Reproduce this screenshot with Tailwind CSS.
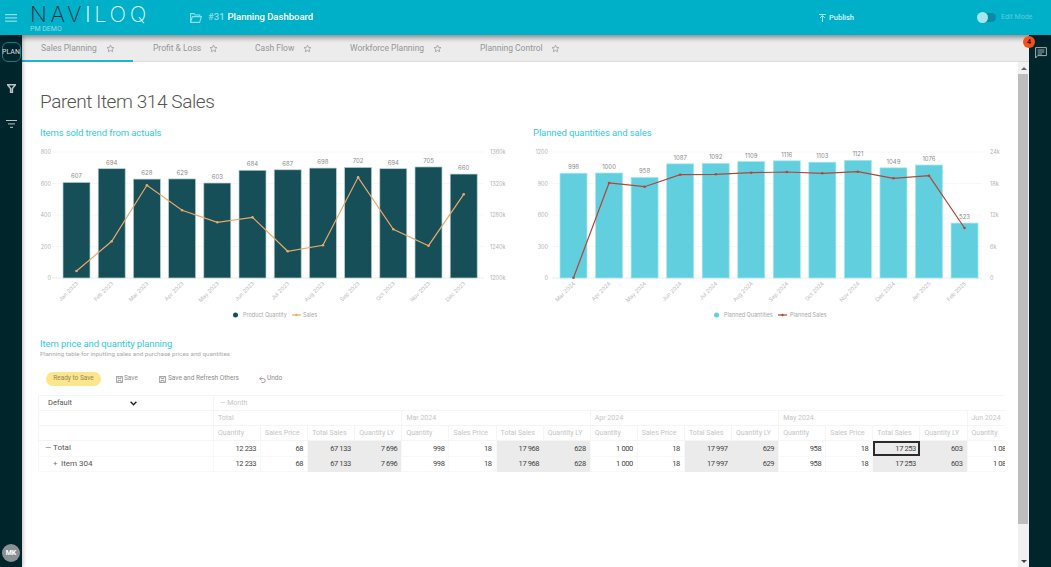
<!DOCTYPE html>
<html lang="en">
<head>
    <meta charset="UTF-8">
    <meta name="viewport" content="width=device-width, initial-scale=1.0">
    <title>Naviloq | Planning Dashboard</title>
    <script src="https://cdn.jsdelivr.net/npm/@tailwindcss/browser@4"></script>
</head>
<body class="h-[567px] w-[1051px] overflow-hidden flex flex-col bg-white font-['Roboto',sans-serif]">
    <!-- Header -->
    <header class="relative z-20 h-[35px] shrink-0 flex items-center bg-[#00b0c9] shadow-[0_2px_5px_rgba(0,0,0,0.35)]">
        <svg class="ml-[5px] w-[12px] h-[8px] text-[#8fdde8]" viewBox="0 0 12 8" fill="currentColor">
            <rect width="12" height="1.2" /><rect y="3.3" width="12" height="1.2" /><rect y="6.6" width="12" height="1.2" />
        </svg>
        <div class="ml-[13px] w-[130px] h-[35px] relative">
            <div class="absolute left-0 top-[1px] text-[22px] leading-[26px] font-['Inter'] font-[200] tracking-[3.6px] whitespace-nowrap text-[#d9f6fa]"><span class="text-[#06323c]">NAV</span><span class="text-white">I</span>LOQ</div>
            <div class="absolute left-0 top-[25px] text-[7px] leading-[9px] text-[#8fdde8]">PM DEMO</div>
        </div>
        <div class="ml-[30px] w-[629px] flex items-center">
            <svg class="w-[12px] h-[10px] text-[#8fdde8]" viewBox="0 0 12 10" fill="none" stroke="currentColor" stroke-width="1.1">
                <path d="M.6 9.4V.6h3.6l1 1.4h4.6v1.6M.6 9.4h9l1.8-5.8H2.4L.6 9.4Z" />
            </svg>
            <span class="ml-[6px] text-[9.5px] font-medium text-[#8fdde8]">#31</span>
            <span class="ml-[3px] text-[9.5px] font-medium text-white">Planning Dashboard</span>
        </div>
        <div class="w-[158px] flex items-center">
            <svg class="w-[7px] h-[8px] text-[#b5ecf3]" viewBox="0 0 7 8" fill="none" stroke="currentColor" stroke-width="0.9">
                <path d="M0 .5h7M1 4l2.5-2.5L6 4M3.5 2v6" />
            </svg>
            <span class="ml-[3px] text-[7.5px] font-medium text-[#d9f6fa]">Publish</span>
        </div>
        <div class="relative w-[19px] h-[9px] rounded-full bg-[#0a8aa6]">
            <div class="absolute left-0 top-[-1px] w-[11px] h-[11px] rounded-full bg-[#a6e6ee]"></div>
        </div>
        <span class="ml-[5px] text-[7px] text-[#5cccdc]">Edit Mode</span>
    </header>

    <div class="flex-1 flex min-h-0">
        <!-- Left rail -->
        <aside class="relative z-10 w-[22px] shrink-0 flex flex-col items-center bg-[#00252b] shadow-[1px_0_4px_rgba(0,0,0,0.25)]">
            <div class="mt-[7px] w-[19px] h-[20px] flex items-center justify-center rounded-[6px] border border-[#0e7f8e] text-[7px] text-[#d5e2e4]">PLAN</div>
            <svg class="mt-[22px] w-[9px] h-[9px] text-[#b9c6c8]" viewBox="0 0 9 9" fill="none" stroke="currentColor" stroke-width="1.5">
                <path d="M.6.8h7.8L5.4 4.6v3.8h-1.8V4.6L.6.8Z" />
            </svg>
            <svg class="mt-[27px] w-[11px] h-[8px] text-[#b9c6c8]" viewBox="0 0 11 8" fill="currentColor">
                <rect width="11" height="1" /><rect x="2" y="3.4" width="7" height="1" /><rect x="4" y="6.8" width="3" height="1" />
            </svg>
            <div class="mt-auto mb-[5px] w-[18px] h-[18px] rounded-full bg-[#8a9193] flex items-center justify-center text-[7px] font-bold text-white">MK</div>
        </aside>

        <!-- Centre -->
        <div class="flex-1 min-w-0 flex flex-col">
            <!-- Tabs -->
            <nav class="h-[27px] shrink-0 flex bg-gradient-to-b from-[#cfcfcf] via-[#ececec] via-30% to-[#ececec] border-b border-[#dcdcdc] text-[8.5px] text-[#969696]">
                <div class="w-[111px] pl-[19px] pt-[1px] flex items-center gap-[9px] border-b-2 border-[#1cb6cc] h-[27px]">Sales Planning <svg class="w-[9px] h-[9px]" viewBox="0 0 24 24" fill="none" stroke="currentColor" stroke-width="2"><path d="m12 3 2.8 5.9 6.4.8-4.7 4.4 1.2 6.4-5.7-3.1-5.7 3.1 1.2-6.4-4.7-4.4 6.4-.8L12 3Z" /></svg></div>
                <div class="w-[102px] pl-[20px] pt-[1px] flex items-center gap-[8px]">Profit &amp; Loss <svg class="w-[9px] h-[9px]" viewBox="0 0 24 24" fill="none" stroke="currentColor" stroke-width="2"><path d="m12 3 2.8 5.9 6.4.8-4.7 4.4 1.2 6.4-5.7-3.1-5.7 3.1 1.2-6.4-4.7-4.4 6.4-.8L12 3Z" /></svg></div>
                <div class="w-[95px] pl-[20px] pt-[1px] flex items-center gap-[9px]">Cash Flow <svg class="w-[9px] h-[9px]" viewBox="0 0 24 24" fill="none" stroke="currentColor" stroke-width="2"><path d="m12 3 2.8 5.9 6.4.8-4.7 4.4 1.2 6.4-5.7-3.1-5.7 3.1 1.2-6.4-4.7-4.4 6.4-.8L12 3Z" /></svg></div>
                <div class="w-[130px] pl-[20px] pt-[1px] flex items-center gap-[9px]">Workforce Planning <svg class="w-[9px] h-[9px]" viewBox="0 0 24 24" fill="none" stroke="currentColor" stroke-width="2"><path d="m12 3 2.8 5.9 6.4.8-4.7 4.4 1.2 6.4-5.7-3.1-5.7 3.1 1.2-6.4-4.7-4.4 6.4-.8L12 3Z" /></svg></div>
                <div class="pl-[20px] pt-[1px] flex items-center gap-[8px]">Planning Control <svg class="w-[9px] h-[9px]" viewBox="0 0 24 24" fill="none" stroke="currentColor" stroke-width="2"><path d="m12 3 2.8 5.9 6.4.8-4.7 4.4 1.2 6.4-5.7-3.1-5.7 3.1 1.2-6.4-4.7-4.4 6.4-.8L12 3Z" /></svg></div>
            </nav>

            <div class="flex-1 min-h-0 flex">
                <!-- Main -->
                <main class="flex-1 min-w-0 overflow-hidden pl-[18px] pt-[26px]">
                    <h1 class="h-[28px] text-[19px] leading-[28px] font-light tracking-[-0.4px] text-[#555]">Parent Item 314 Sales</h1>

                    <div class="mt-[10px] grid grid-cols-[493px_483px]">
                        <section>
                            <h2 class="h-[14px] text-[9.5px] leading-[14px] tracking-[-0.1px] text-[#35c9dc]">Items sold trend from actuals</h2>
                            <svg id="chartSold" class="block font-['Inter']" width="483" height="185" viewBox="40 140 483 185"></svg>
                        </section>
                        <section>
                            <h2 class="h-[14px] text-[9.5px] leading-[14px] tracking-[-0.1px] text-[#35c9dc]">Planned quantities and sales</h2>
                            <svg id="chartPlanned" class="block font-['Inter']" width="483" height="185" viewBox="533 140 483 185"></svg>
                        </section>
                    </div>

                    <h2 class="mt-[12px] h-[13px] text-[9.5px] leading-[13px] tracking-[-0.1px] text-[#35c9dc]">Item price and quantity planning</h2>
                    <p class="h-[8px] text-[6.25px] leading-[8px] text-[#aaa]">Planning table for inputting sales and purchase prices and quantities</p>

                    <!-- Toolbar -->
                    <div class="mt-[14px] ml-[6px] h-[14px] flex items-center text-[6.5px] text-[#8c8c8c]">
                        <span class="w-[55px] h-[14px] flex items-center justify-center rounded-full bg-[#fde58c] text-[#948a5c]">Ready to Save</span>
                        <svg class="ml-[15px] w-[7px] h-[7px]" viewBox="0 0 7 7" fill="none" stroke="currentColor" stroke-width="0.8"><path d="M.4.4h6.2v6.2H.4ZM2 .4v2h3v-2M2 6.6V4.4h3v2.2" /></svg>
                        <span class="ml-[1px] w-[14px]">Save</span>
                        <svg class="ml-[21px] w-[7px] h-[7px]" viewBox="0 0 7 7" fill="none" stroke="currentColor" stroke-width="0.8"><path d="M.4.4h6.2v6.2H.4ZM2 .4v2h3v-2M2 6.6V4.4h3v2.2" /></svg>
                        <span class="ml-[2px] w-[70px] whitespace-nowrap">Save and Refresh Others</span>
                        <svg class="ml-[21px] w-[7px] h-[7px]" viewBox="0 0 7 7" fill="none" stroke="currentColor" stroke-width="0.8"><path d="M2.6.8.6 2.6l2 1.8M.6 2.6h3.6a2 2 0 0 1 0 4H2.4" /></svg>
                        <span class="ml-[1px]">Undo</span>
                    </div>

                    <!-- Planning table -->
                    <div class="mt-[9px] -ml-[2px] w-[967px] overflow-hidden">
                        <table class="table-fixed w-[976px] border-collapse text-[7px]">
                            <colgroup id="tableCols"></colgroup>
                            <tbody id="tableBody"></tbody>
                        </table>
                    </div>
                </main>

                <!-- Scrollbar -->
                <div class="w-[11px] shrink-0 flex flex-col bg-[#f1f1f1]">
                    <div class="h-[12px] flex items-center justify-center">
                        <div class="w-0 h-0 border-x-[3px] border-x-transparent border-b-[3px] border-b-[#666]"></div>
                    </div>
                    <div class="h-[450px] mr-[1px] bg-[#bdbdbd]"></div>
                    <div class="mt-auto h-[12px] flex items-center justify-center">
                        <div class="w-0 h-0 border-x-[3px] border-x-transparent border-t-[3px] border-t-[#444]"></div>
                    </div>
                </div>
            </div>
        </div>

        <!-- Right rail -->
        <aside class="relative w-[22px] shrink-0 bg-[#00252b] flex flex-col items-center">
            <div class="absolute z-30 left-[-6px] top-[1px] w-[12px] h-[12px] rounded-full bg-[#f4511e] flex items-center justify-center text-[7px] font-bold text-[#3a1208]">4</div>
            <svg class="mt-[12px] ml-[1px] w-[12px] h-[12px] text-[#9fb0b3]" viewBox="0 0 12 12" fill="none" stroke="currentColor" stroke-width="1">
                <path d="M.6.6h10.8v8H2.6L.6 11V.6ZM2.6 3h6.8M2.6 5h6.8M2.6 7h4.6" />
            </svg>
        </aside>
    </div>

    <script>
        const months23 = ['Jan', 'Feb', 'Mar', 'Apr', 'May', 'Jun', 'Jul', 'Aug', 'Sep', 'Oct', 'Nov', 'Dec'].map(m => m + ' 2023');
        const months24 = ['Mar 2024', 'Apr 2024', 'May 2024', 'Jun 2024', 'Jul 2024', 'Aug 2024', 'Sep 2024', 'Oct 2024', 'Nov 2024', 'Dec 2024', 'Jan 2025', 'Feb 2025'];

        const charts = [{
            id: 'chartSold', months: months23, left: 52, right: 484, first: 63, step: 35.2, max: 800,
            values: [607, 694, 628, 629, 603, 684, 687, 698, 702, 694, 705, 660],
            fill: '#164f57', edge: '#b5d0d4', lineColor: '#e9a96b',
            line: [271, 241.3, 185.3, 210.3, 222.3, 217.3, 251.3, 245.3, 177.3, 229.3, 245.7, 194.3],
            leftTicks: ['800', '600', '400', '200', '0'], rightTicks: ['1360k', '1320k', '1280k', '1240k', '1200k'],
            leftX: 51, rightX: 490,
            legend: { dot: 235.5, dotText: 243, dotLabel: 'Product Quantity', mark: 292, markText: 303, markLabel: 'Sales' }
        }, {
            id: 'chartPlanned', months: months24, left: 552, right: 982, first: 560, step: 35.55, max: 1200,
            values: [998, 1000, 958, 1087, 1092, 1109, 1116, 1103, 1121, 1049, 1076, 523],
            fill: '#62cfde', edge: '#a4e8f0', lineColor: '#b0473a',
            line: [277.7, 183, 186.7, 174.7, 174.3, 172.7, 172, 173.3, 171.7, 178.3, 175.7, 228],
            leftTicks: ['1200', '900', '600', '300', '0'], rightTicks: ['24k', '18k', '12k', '6k', '0'],
            leftX: 548, rightX: 990,
            legend: { dot: 716.5, dotText: 724, dotLabel: 'Planned Quantities', mark: 778, markText: 790, markLabel: 'Planned Sales' }
        }];

        const text = (x, y, str, size, color, extra = '') =>
            `<text x="${x}" y="${y}" font-size="${size}" fill="${color}" ${extra}>${str}</text>`;

        charts.forEach(c => {
            let out = '';
            const top = 152, base = 278, barW = 27;

            // grid and axis labels
            c.leftTicks.forEach((t, i) => {
                const y = top + i * (base - top) / 4;
                out += `<line x1="${c.left}" x2="${c.right}" y1="${y}" y2="${y}" stroke="${i === 4 ? '#ececec' : '#f7f7f7'}" stroke-width="1" />`;
                out += text(c.leftX, y + 2, t, 5.5, '#b4b4b4', 'text-anchor="end"');
                out += text(c.rightX, y + 2, c.rightTicks[i], 5.5, '#b4b4b4');
            });

            // bars
            c.values.forEach((v, i) => {
                const x = c.first + i * c.step, h = v * (base - top) / c.max, y = base - h;
                out += `<rect x="${x}" y="${y}" width="${barW}" height="${h}" fill="${c.fill}" stroke="${c.edge}" stroke-width="0.7" />`;
                out += text(x + barW / 2, y - 4, v, 6, '#8c8c8c', 'text-anchor="middle"');
                const lx = x + barW / 2 + 2;
                out += text(lx, 284, c.months[i], 5.5, '#bababa', `text-anchor="end" transform="rotate(-45 ${lx} 284)"`);
            });

            // line series
            const pts = c.line.map((y, i) => [c.first + i * c.step + barW / 2, y]);
            out += `<polyline points="${pts.map(p => p.join(',')).join(' ')}" fill="none" stroke="${c.lineColor}" stroke-width="1.2" />`;
            pts.forEach(p => { out += `<circle cx="${p[0]}" cy="${p[1]}" r="1.3" fill="${c.lineColor}" />`; });

            // legend
            const l = c.legend;
            out += `<circle cx="${l.dot}" cy="315" r="2.5" fill="${c.fill}" />`;
            out += text(l.dotText, 317, l.dotLabel, 5.5, '#a8a8a8');
            out += `<line x1="${l.mark}" x2="${l.mark + 9}" y1="315" y2="315" stroke="${c.lineColor}" stroke-width="1.2" />`;
            out += `<circle cx="${l.mark + 4.5}" cy="315" r="1.2" fill="${c.lineColor}" />`;
            out += text(l.markText, 317, l.markLabel, 5.5, '#a8a8a8');

            document.getElementById(c.id).innerHTML = out;
        });

        // table
        document.getElementById('tableCols').innerHTML = '<col class="w-[175px]">' + '<col class="w-[47.1px]">'.repeat(17);

        const head = 'border border-[#f5f5f5] h-[15px] px-[4px] text-left font-normal text-[#c6c6c6] whitespace-nowrap overflow-hidden';
        const numCell = 'border border-[#f8f8f8] h-[15.5px] px-[4px] text-right text-[7.5px] tracking-[-0.4px] text-[#444] whitespace-nowrap';
        const shaded = 'h-[15.5px] px-[4px] text-right text-[7.5px] tracking-[-0.4px] text-[#444] whitespace-nowrap bg-[#ebebeb]';
        const picked = 'h-[15.5px] px-[4px] text-right text-[7.5px] tracking-[-0.4px] text-[#444] whitespace-nowrap bg-[#ebebeb] outline-2 outline-offset-[-2px] outline-[#2a2a2a]';
        const labels = ['Quantity', 'Sales Price', 'Total Sales', 'Quantity LY'];
        const groups = ['Total', 'Mar 2024', 'Apr 2024', 'May 2024'];
        const rowData = [
            ['12 233', '68', '67 133', '7 696'], ['998', '18', '17 968', '628'],
            ['1 000', '18', '17 997', '629'], ['958', '18', '17 253', '603']
        ];

        let rows = `<tr><td class="${head} !px-0"><div class="flex items-center justify-between pl-[9px] pr-[76px] text-[7.5px] text-[#555]"><span>Default</span><svg class="w-[7px] h-[5px] text-[#222]" viewBox="0 0 7 5" fill="none" stroke="currentColor" stroke-width="1.4"><path d="m.6.8 2.9 2.9L6.4.8" /></svg></div></td><td colspan="17" class="${head} !pl-[6px]">— Month</td></tr>`;
        rows += `<tr><td class="${head}"></td>` + groups.map(g => `<td colspan="4" class="${head}">${g}</td>`).join('') + `<td class="${head}">Jun 2024</td></tr>`;
        rows += `<tr><td class="${head}"></td>` + groups.map(() => labels.map(n => `<td class="${head}">${n}</td>`).join('')).join('') + `<td class="${head}">Quantity</td></tr>`;

        [['—', 'Total', 'pl-[6px]'], ['+', 'Item 304', 'pl-[14px]']].forEach((r, ri) => {
            rows += `<tr><td class="border border-[#f8f8f8] h-[15.5px] text-[8px] text-[#555] ${r[2]}"><span class="inline-block w-[8px] text-[#777]">${r[0]}</span>${r[1]}</td>`;
            rowData.forEach((g, gi) => g.forEach((v, vi) => {
                let cls = vi >= 2 ? shaded : numCell;
                if (ri === 0 && gi === 3 && vi === 2) cls = picked;
                rows += `<td class="${cls}">${v}</td>`;
            }));
            rows += `<td class="${numCell}">1 087</td></tr>`;
        });
        document.getElementById('tableBody').innerHTML = rows;
    </script>
</body>
</html>
